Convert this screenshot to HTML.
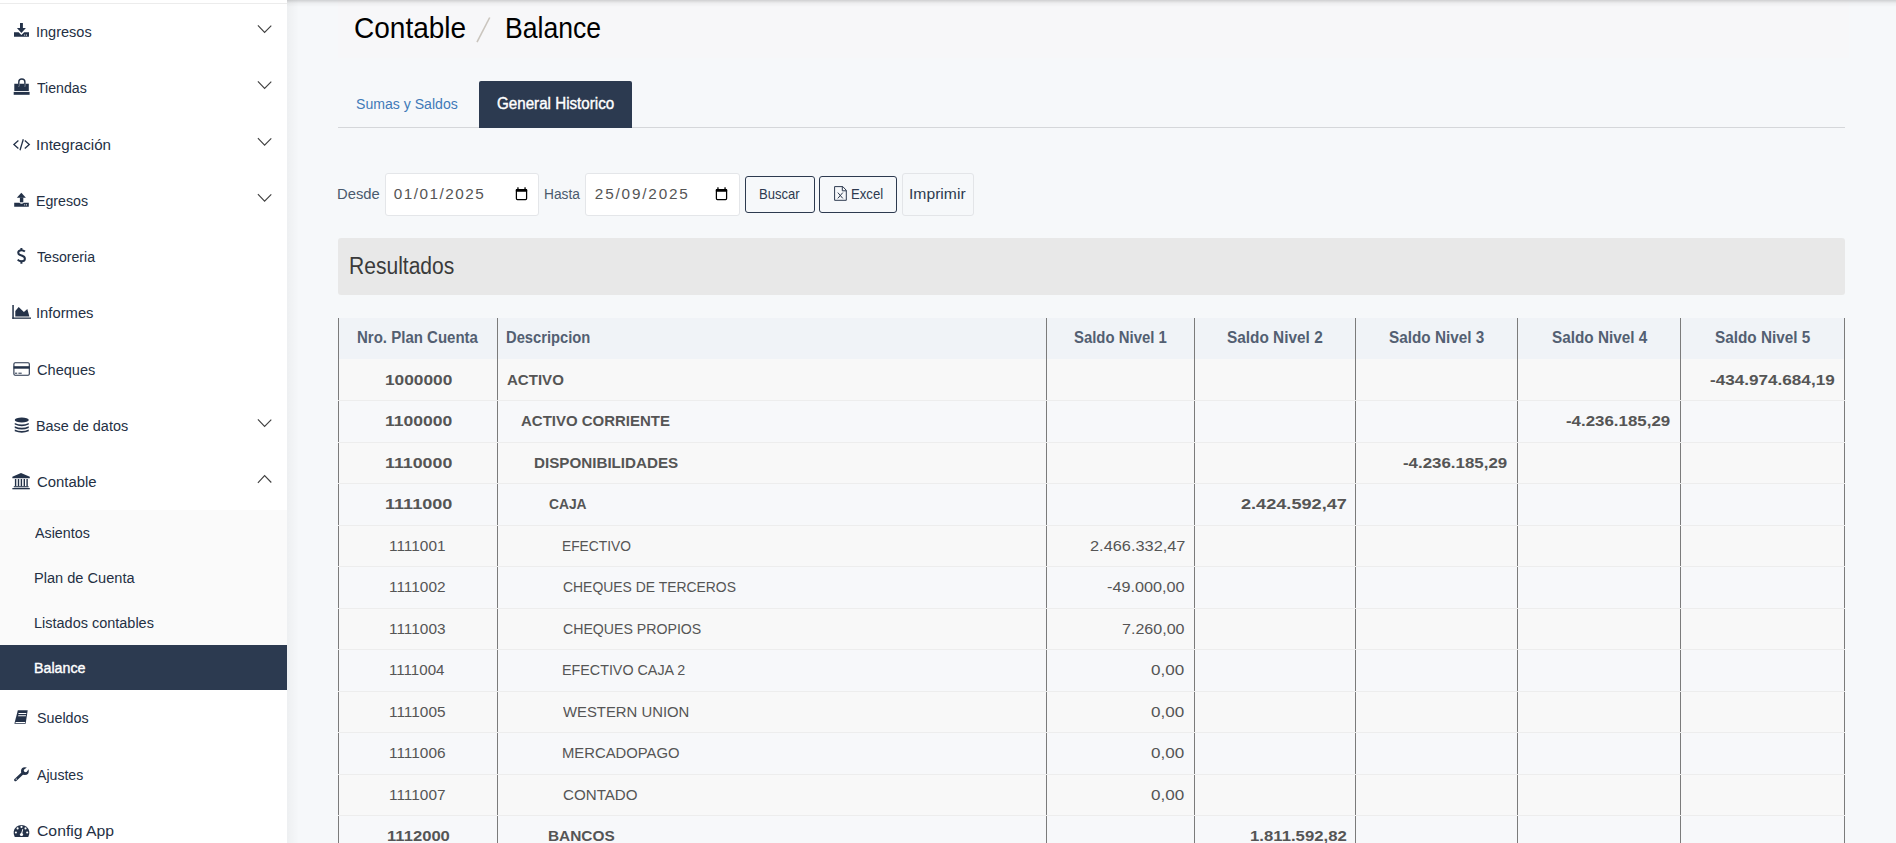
<!DOCTYPE html>
<html><head><meta charset="utf-8">
<style>
*{box-sizing:border-box;margin:0;padding:0}
html,body{width:1896px;height:843px;overflow:hidden;background:#f6f8fa;font-family:"Liberation Sans",sans-serif}
.r{position:absolute}
.t{position:absolute;white-space:nowrap;line-height:1}
</style></head><body>
<!-- sidebar -->
<div class="r" style="left:0;top:0;width:287px;height:843px;background:#ffffff"></div>
<div class="r" style="left:287px;top:0;width:12px;height:843px;background:linear-gradient(to right,rgba(0,0,0,.035),rgba(0,0,0,0))"></div>
<div class="r" style="left:0;top:3px;width:287px;height:1px;background:#ececec"></div>
<div class="r" style="left:0;top:510px;width:287px;height:135px;background:#fafafa"></div>
<div class="r" style="left:0;top:645px;width:287px;height:45px;background:#2c3a50"></div>
<!-- header shadow -->
<div class="r" style="left:338px;top:0;width:1511px;height:58px;background:#f7f7f9"></div>
<!-- tabs -->
<div class="r" style="left:338px;top:126.5px;width:1507px;height:1px;background:#d5d7da"></div>
<div class="r" style="left:479px;top:81px;width:153px;height:46.5px;background:#2c3a50;border-radius:2px 2px 0 0"></div>
<!-- inputs -->
<div class="r" style="left:385px;top:173px;width:154px;height:43px;background:#fff;border:1px solid #e4e6e9;border-radius:3px"></div>
<div class="r" style="left:585px;top:173px;width:155px;height:43px;background:#fff;border:1px solid #e4e6e9;border-radius:3px"></div>
<div class="r" style="left:745px;top:176px;width:70px;height:37px;border:1.5px solid #2d3a4f;border-radius:3px"></div>
<div class="r" style="left:819px;top:176px;width:78px;height:37px;border:1.5px solid #2d3a4f;border-radius:3px"></div>
<div class="r" style="left:902px;top:173px;width:72px;height:43px;border:1px solid #e3e5e8;border-radius:3px"></div>
<!-- results -->
<div class="r" style="left:338px;top:238px;width:1507px;height:57px;background:#e8e8e8;border-radius:3px"></div>
<!-- table -->
<div class="r" style="left:338px;top:318px;width:1507px;height:41.3px;background:#f0f3f7"></div>
<div class="r" style="left:287px;top:0;width:1609px;height:7px;background:linear-gradient(to bottom,rgba(0,0,0,.16),rgba(0,0,0,.04) 45%,rgba(0,0,0,0))"></div>
<div class="r" style="left:338px;top:359.00px;width:1507px;height:41.50px;background:#f8f8f8"></div>
<div class="r" style="left:338px;top:400.50px;width:1507px;height:41.50px;background:#f7f8fa"></div>
<div class="r" style="left:338px;top:442.00px;width:1507px;height:41.50px;background:#f8f8f8"></div>
<div class="r" style="left:338px;top:483.50px;width:1507px;height:41.50px;background:#f7f8fa"></div>
<div class="r" style="left:338px;top:525.00px;width:1507px;height:41.50px;background:#f8f8f8"></div>
<div class="r" style="left:338px;top:566.50px;width:1507px;height:41.50px;background:#f7f8fa"></div>
<div class="r" style="left:338px;top:608.00px;width:1507px;height:41.50px;background:#f8f8f8"></div>
<div class="r" style="left:338px;top:649.50px;width:1507px;height:41.50px;background:#f7f8fa"></div>
<div class="r" style="left:338px;top:691.00px;width:1507px;height:41.50px;background:#f8f8f8"></div>
<div class="r" style="left:338px;top:732.50px;width:1507px;height:41.50px;background:#f7f8fa"></div>
<div class="r" style="left:338px;top:774.00px;width:1507px;height:41.50px;background:#f8f8f8"></div>
<div class="r" style="left:338px;top:815.50px;width:1507px;height:41.50px;background:#f7f8fa"></div>
<div class="r" style="left:337.90px;top:318px;width:1.2px;height:525px;background:#7b7b7b"></div>
<div class="r" style="left:496.60px;top:318px;width:1.2px;height:525px;background:#7b7b7b"></div>
<div class="r" style="left:1045.80px;top:318px;width:1.2px;height:525px;background:#7b7b7b"></div>
<div class="r" style="left:1193.80px;top:318px;width:1.2px;height:525px;background:#7b7b7b"></div>
<div class="r" style="left:1354.80px;top:318px;width:1.2px;height:525px;background:#7b7b7b"></div>
<div class="r" style="left:1517.00px;top:318px;width:1.2px;height:525px;background:#7b7b7b"></div>
<div class="r" style="left:1679.70px;top:318px;width:1.2px;height:525px;background:#7b7b7b"></div>
<div class="r" style="left:1843.70px;top:318px;width:1.2px;height:525px;background:#7b7b7b"></div>
<div class="r" style="left:338px;top:400.00px;width:1507px;height:1px;background:#ededed"></div>
<div class="r" style="left:338px;top:441.50px;width:1507px;height:1px;background:#ededed"></div>
<div class="r" style="left:338px;top:483.00px;width:1507px;height:1px;background:#ededed"></div>
<div class="r" style="left:338px;top:524.50px;width:1507px;height:1px;background:#ededed"></div>
<div class="r" style="left:338px;top:566.00px;width:1507px;height:1px;background:#ededed"></div>
<div class="r" style="left:338px;top:607.50px;width:1507px;height:1px;background:#ededed"></div>
<div class="r" style="left:338px;top:649.00px;width:1507px;height:1px;background:#ededed"></div>
<div class="r" style="left:338px;top:690.50px;width:1507px;height:1px;background:#ededed"></div>
<div class="r" style="left:338px;top:732.00px;width:1507px;height:1px;background:#ededed"></div>
<div class="r" style="left:338px;top:773.50px;width:1507px;height:1px;background:#ededed"></div>
<div class="r" style="left:338px;top:815.00px;width:1507px;height:1px;background:#ededed"></div>
<div class="r" style="left:338px;top:856.50px;width:1507px;height:1px;background:#ededed"></div>
<svg class="r" style="left:0;top:0" width="1896" height="843" viewBox="0 0 1896 843">
<g fill="#243249">
<!-- Ingresos: download -->
<rect x="20" y="23" width="2.9" height="5.5"/>
<path d="M16.9 28.1 H25.9 L21.4 33 Z"/>
<path d="M14 32.3 H18.6 L21.4 35 L24.2 32.3 H29 V36.8 H14 Z"/>
<!-- Tiendas: bag -->
<path d="M14.3 83.8 H18.1 V86.3 H19.5 V83.8 H24.2 V86.3 H25.6 V83.8 H28.8 V90.9 H14.3 Z"/>
<rect x="13.7" y="91.9" width="15.9" height="2.9"/>
<path d="M18.8 86 V82 A3 3 0 0 1 24.9 82 V86" fill="none" stroke="#243249" stroke-width="1.4"/>
<!-- Egresos: upload -->
<path d="M16.8 197.65 H25.9 L21.35 192.8 Z"/>
<rect x="19.9" y="197.5" width="3.4" height="4.8"/>
<path d="M14.2 202.7 H19.3 Q21.6 204.6 23.9 202.7 H28.8 V206.8 H14.2 Z"/>
<!-- Informes: chart -->
<rect x="12.3" y="305" width="1.5" height="13.8"/>
<rect x="12.3" y="317.5" width="18.7" height="1.3"/>
<path d="M15.3 311 L18.7 307 L23.9 312 L27.3 309.1 L29.4 316.4 H15.3 Z"/>
<!-- Cheques: card -->
<rect x="13.9" y="362.7" width="15.4" height="12.5" rx="1.2" fill="none" stroke="#243249" stroke-width="1.1"/>
<rect x="13.6" y="366.2" width="16" height="2.5"/>
<rect x="15" y="372.7" width="2.2" height="1"/>
<rect x="18.4" y="372.7" width="3.3" height="1"/>
<!-- Base de datos -->
<ellipse cx="21.75" cy="420" rx="7" ry="2.4"/>
<path d="M14.75 422.9 Q21.75 426 28.75 422.9 V424.6 Q21.75 427.7 14.75 424.6 Z"/>
<path d="M14.75 426.2 Q21.75 429.3 28.75 426.2 V427.9 Q21.75 431 14.75 427.9 Z"/>
<path d="M14.75 429.5 Q21.75 432.6 28.75 429.5 V431.3 Q21.75 434.2 14.75 431.3 Z"/>
<!-- Contable: bank -->
<path d="M12.35 476.8 L21 473.1 L29.8 476.8 V478.2 H12.35 Z"/>
<rect x="14.9" y="479" width="1.4" height="7.2"/>
<rect x="17.8" y="479" width="1.4" height="7.2"/>
<rect x="20.7" y="479" width="1.4" height="7.2"/>
<rect x="23.6" y="479" width="1.4" height="7.2"/>
<rect x="26.4" y="479" width="1.4" height="7.2"/>
<rect x="13.8" y="486.2" width="14.8" height="1.1"/>
<rect x="12.35" y="488" width="17.45" height="1.3"/>
<!-- Sueldos: book -->
<path d="M17.8 710.2 H27.7 L25.65 723.7 H14.4 Z"/>
<!-- Ajustes: wrench -->
<path d="M15.4 779.9 L22.3 773.6" stroke="#243249" stroke-width="2.7" stroke-linecap="round"/>
<circle cx="24.9" cy="771.1" r="3.9"/>
<!-- Config App: gauge -->
<path d="M14.75 836.9 A7.9 7.9 0 1 1 28.25 836.9 Z"/>
</g>
<g fill="#ffffff">
<rect x="24.2" y="34.6" width="1" height="1"/><rect x="26" y="34.6" width="1" height="1"/>
<rect x="24.2" y="204.4" width="1" height="1"/><rect x="26" y="204.4" width="1" height="1"/>
<path d="M18.6 713 H26.4 L26.2 714 H18.4 Z"/><path d="M18.3 715.3 H26 L25.8 716.3 H18.1 Z"/>
<path d="M15.6 722 H25.2 L25.1 722.9 H15.5 Z"/>
<circle cx="17.6" cy="828.4" r="1.05"/><circle cx="21.5" cy="826.9" r="1.05"/><circle cx="25.5" cy="828.4" r="1.05"/>
<circle cx="15.9" cy="832.5" r="1.05"/><circle cx="27.2" cy="832.5" r="1.05"/><circle cx="21.5" cy="834.5" r="1.6"/>
<path d="M20.9 834 L22.4 829 L23.2 829.2 L22.1 834.3 Z"/>
<circle cx="16.2" cy="779.1" r="0.65"/><circle cx="25.6" cy="770.4" r="1.75"/><path d="M24.9 769.3 L26.8 771.2 L30 768 L28.1 766.1 Z"/>
</g>
<!-- Integracion code icon -->
<g fill="none" stroke="#243249" stroke-width="1.3">
<path d="M18.4 140.6 L13.9 144.5 L18.4 148.6"/>
<path d="M24.8 140.6 L29.3 144.5 L24.8 148.6"/>
<path d="M23.3 139.2 L20 150.2"/>
</g>
<!-- Tesoreria $ -->
<g fill="none" stroke="#243249" stroke-width="2">
<path d="M24.9 251.6 Q23.4 250.2 21.4 250.2 Q18.2 250.2 18.2 252.7 Q18.2 254.6 21.5 255.5 Q24.9 256.4 24.9 258.7 Q24.9 261.2 21.4 261.2 Q19.2 261.2 17.7 259.6"/>
<path d="M21.4 247.9 V250.6 M21.4 260.8 V263.8"/>
</g>
<!-- chevrons -->
<g fill="none" stroke="#404040" stroke-width="1.15">
<path d="M257.9 25.3 L264.6 32.4 L271.3 25.6"/>
<path d="M257.9 81.3 L264.6 88.4 L271.3 81.6"/>
<path d="M257.9 138.1 L264.6 145.2 L271.3 138.4"/>
<path d="M257.9 194.1 L264.6 201.2 L271.3 194.4"/>
<path d="M257.9 419.3 L264.6 426.4 L271.3 419.6"/>
<path d="M257.9 482.8 L264.6 475.7 L271.3 482.5"/>
</g>
<!-- title slash -->
<path d="M489.7 17.5 L477 42.2" stroke="#cac5be" stroke-width="1.6"/>
<!-- calendar icons -->
<g fill="none" stroke="#000" stroke-width="1.25">
<rect x="516.4" y="189.6" width="10.2" height="10" rx="1"/>
<rect x="716.4" y="189.6" width="10.2" height="10" rx="1"/>
</g>
<g fill="#000">
<rect x="515.8" y="189" width="11.4" height="2.8" rx="0.8"/><rect x="517.3" y="187.3" width="1.3" height="2"/><rect x="524.4" y="187.3" width="1.3" height="2"/>
<rect x="715.8" y="189" width="11.4" height="2.8" rx="0.8"/><rect x="717.3" y="187.3" width="1.3" height="2"/><rect x="724.4" y="187.3" width="1.3" height="2"/>
</g>
<!-- excel icon -->
<g fill="none" stroke="#2d3a4f" stroke-width="1">
<path d="M834.6 186.6 H842.8 L846.3 190.3 V200.3 H834.6 Z"/>
<path d="M842.3 186.6 V190.8 H846.3"/>
<path d="M837.8 192.6 L842.8 198.4 M842.8 192.6 L837.8 198.4"/>
</g>
</svg>

<div class="t" style="left:35.66px;top:24.00px;font-size:15.50px;letter-spacing:0.000px;font-weight:normal;color:#243044;;transform:scaleX(0.9370);transform-origin:0 0">Ingresos</div>
<div class="t" style="left:36.60px;top:80.00px;font-size:15.50px;letter-spacing:0.000px;font-weight:normal;color:#243044;;transform:scaleX(0.9121);transform-origin:0 0">Tiendas</div>
<div class="t" style="left:35.62px;top:137.00px;font-size:15.50px;letter-spacing:0.000px;font-weight:normal;color:#243044;;transform:scaleX(0.9778);transform-origin:0 0">Integración</div>
<div class="t" style="left:35.68px;top:193.00px;font-size:15.50px;letter-spacing:0.000px;font-weight:normal;color:#243044;;transform:scaleX(0.9160);transform-origin:0 0">Egresos</div>
<div class="t" style="left:36.60px;top:249.00px;font-size:15.50px;letter-spacing:0.000px;font-weight:normal;color:#243044;;transform:scaleX(0.9107);transform-origin:0 0">Tesoreria</div>
<div class="t" style="left:35.65px;top:305.00px;font-size:15.50px;letter-spacing:0.000px;font-weight:normal;color:#243044;;transform:scaleX(0.9539);transform-origin:0 0">Informes</div>
<div class="t" style="left:36.60px;top:362.00px;font-size:15.50px;letter-spacing:0.000px;font-weight:normal;color:#243044;;transform:scaleX(0.9407);transform-origin:0 0">Cheques</div>
<div class="t" style="left:35.67px;top:418.00px;font-size:15.50px;letter-spacing:0.000px;font-weight:normal;color:#243044;;transform:scaleX(0.9293);transform-origin:0 0">Base de datos</div>
<div class="t" style="left:36.60px;top:474.00px;font-size:15.50px;letter-spacing:0.000px;font-weight:normal;color:#243044;;transform:scaleX(0.9589);transform-origin:0 0">Contable</div>
<div class="t" style="left:34.50px;top:525.00px;font-size:15.50px;letter-spacing:0.000px;font-weight:normal;color:#243044;;transform:scaleX(0.9230);transform-origin:0 0">Asientos</div>
<div class="t" style="left:33.56px;top:570.00px;font-size:15.50px;letter-spacing:0.000px;font-weight:normal;color:#243044;;transform:scaleX(0.9413);transform-origin:0 0">Plan de Cuenta</div>
<div class="t" style="left:33.57px;top:615.00px;font-size:15.50px;letter-spacing:0.000px;font-weight:normal;color:#243044;;transform:scaleX(0.9339);transform-origin:0 0">Listados contables</div>
<div class="t" style="left:33.78px;top:660.00px;font-size:15.50px;letter-spacing:0.000px;font-weight:normal;color:#ffffff;-webkit-text-stroke:0.4px #fff;transform:scaleX(0.9192);transform-origin:0 0">Balance</div>
<div class="t" style="left:36.70px;top:710.00px;font-size:15.50px;letter-spacing:0.000px;font-weight:normal;color:#243044;;transform:scaleX(0.9224);transform-origin:0 0">Sueldos</div>
<div class="t" style="left:36.70px;top:767.00px;font-size:15.50px;letter-spacing:0.000px;font-weight:normal;color:#243044;;transform:scaleX(0.9104);transform-origin:0 0">Ajustes</div>
<div class="t" style="left:36.70px;top:823.00px;font-size:15.50px;letter-spacing:0.000px;font-weight:normal;color:#243044;;transform:scaleX(1.0162);transform-origin:0 0">Config App</div>
<div class="t" style="left:353.84px;top:14.00px;font-size:29.20px;letter-spacing:0.000px;font-weight:normal;color:#000000;;transform:scaleX(0.9598);transform-origin:0 0">Contable</div>
<div class="t" style="left:505.08px;top:14.00px;font-size:29.20px;letter-spacing:0.000px;font-weight:normal;color:#000000;;transform:scaleX(0.9106);transform-origin:0 0">Balance</div>
<div class="t" style="left:356.30px;top:96.00px;font-size:15.30px;letter-spacing:0.000px;font-weight:normal;color:#3f7ab8;;transform:scaleX(0.9208);transform-origin:0 0">Sumas y Saldos</div>
<div class="t" style="left:496.80px;top:96.00px;font-size:15.60px;letter-spacing:0.000px;font-weight:normal;color:#ffffff;-webkit-text-stroke:0.4px #fff;transform:scaleX(0.9728);transform-origin:0 0">General Historico</div>
<div class="t" style="left:337.33px;top:186.00px;font-size:15.30px;letter-spacing:0.000px;font-weight:normal;color:#4a5a6d;;transform:scaleX(0.9670);transform-origin:0 0">Desde</div>
<div class="t" style="left:393.70px;top:186.00px;font-size:15.30px;letter-spacing:1.494px;font-weight:normal;color:#555555;">01/01/2025</div>
<div class="t" style="left:543.80px;top:186.00px;font-size:15.30px;letter-spacing:0.000px;font-weight:normal;color:#4a5a6d;;transform:scaleX(0.8973);transform-origin:0 0">Hasta</div>
<div class="t" style="left:594.80px;top:186.00px;font-size:15.30px;letter-spacing:1.828px;font-weight:normal;color:#555555;">25/09/2025</div>
<div class="t" style="left:758.70px;top:187.00px;font-size:14.60px;letter-spacing:0.000px;font-weight:normal;color:#2d3a4f;;transform:scaleX(0.8954);transform-origin:0 0">Buscar</div>
<div class="t" style="left:850.50px;top:187.00px;font-size:14.60px;letter-spacing:0.000px;font-weight:normal;color:#2d3a4f;;transform:scaleX(0.9000);transform-origin:0 0">Excel</div>
<div class="t" style="left:909.23px;top:187.00px;font-size:14.60px;letter-spacing:0.000px;font-weight:normal;color:#2d3a4f;;transform:scaleX(1.0747);transform-origin:0 0">Imprimir</div>
<div class="t" style="left:349.30px;top:255.00px;font-size:23.30px;letter-spacing:0.000px;font-weight:normal;color:#3a3a3a;;transform:scaleX(0.9034);transform-origin:0 0">Resultados</div>
<div class="t" style="left:356.64px;top:330.00px;font-size:15.60px;letter-spacing:0.000px;font-weight:bold;color:#535f72;;transform:scaleX(0.9627);transform-origin:0 0">Nro. Plan Cuenta</div>
<div class="t" style="left:506.26px;top:330.00px;font-size:15.60px;letter-spacing:0.000px;font-weight:bold;color:#535f72;;transform:scaleX(0.9449);transform-origin:0 0">Descripcion</div>
<div class="t" style="left:1073.80px;top:330.00px;font-size:15.60px;letter-spacing:0.000px;font-weight:bold;color:#535f72;;transform:scaleX(0.9559);transform-origin:0 0">Saldo Nivel 1</div>
<div class="t" style="left:1227.00px;top:330.00px;font-size:15.60px;letter-spacing:0.000px;font-weight:bold;color:#535f72;;transform:scaleX(0.9857);transform-origin:0 0">Saldo Nivel 2</div>
<div class="t" style="left:1389.00px;top:330.00px;font-size:15.60px;letter-spacing:0.000px;font-weight:bold;color:#535f72;;transform:scaleX(0.9806);transform-origin:0 0">Saldo Nivel 3</div>
<div class="t" style="left:1551.70px;top:330.00px;font-size:15.60px;letter-spacing:0.000px;font-weight:bold;color:#535f72;;transform:scaleX(0.9806);transform-origin:0 0">Saldo Nivel 4</div>
<div class="t" style="left:1715.00px;top:330.00px;font-size:15.60px;letter-spacing:0.000px;font-weight:bold;color:#535f72;;transform:scaleX(0.9806);transform-origin:0 0">Saldo Nivel 5</div>
<div class="t" style="left:384.55px;top:372.00px;font-size:15.50px;letter-spacing:0.000px;font-weight:bold;color:#555555;;transform:scaleX(1.1152);transform-origin:0 0">1000000</div>
<div class="t" style="left:507.20px;top:372.00px;font-size:15.50px;letter-spacing:0.000px;font-weight:bold;color:#555555;;transform:scaleX(0.9709);transform-origin:0 0">ACTIVO</div>
<div class="t" style="left:1709.60px;top:372.00px;font-size:15.50px;letter-spacing:0.000px;font-weight:bold;color:#555555;;transform:scaleX(1.1043);transform-origin:0 0">-434.974.684,19</div>
<div class="t" style="left:384.55px;top:413.00px;font-size:15.50px;letter-spacing:0.000px;font-weight:bold;color:#555555;;transform:scaleX(1.1314);transform-origin:0 0">1100000</div>
<div class="t" style="left:521.20px;top:413.00px;font-size:15.50px;letter-spacing:0.000px;font-weight:bold;color:#555555;;transform:scaleX(0.9661);transform-origin:0 0">ACTIVO CORRIENTE</div>
<div class="t" style="left:1566.10px;top:413.00px;font-size:15.50px;letter-spacing:0.000px;font-weight:bold;color:#555555;;transform:scaleX(1.0891);transform-origin:0 0">-4.236.185,29</div>
<div class="t" style="left:384.55px;top:455.00px;font-size:15.50px;letter-spacing:0.000px;font-weight:bold;color:#555555;;transform:scaleX(1.1480);transform-origin:0 0">1110000</div>
<div class="t" style="left:534.22px;top:455.00px;font-size:15.50px;letter-spacing:0.000px;font-weight:bold;color:#555555;;transform:scaleX(0.9793);transform-origin:0 0">DISPONIBILIDADES</div>
<div class="t" style="left:1403.40px;top:455.00px;font-size:15.50px;letter-spacing:0.000px;font-weight:bold;color:#555555;;transform:scaleX(1.0891);transform-origin:0 0">-4.236.185,29</div>
<div class="t" style="left:384.55px;top:496.00px;font-size:15.50px;letter-spacing:0.000px;font-weight:bold;color:#555555;;transform:scaleX(1.1652);transform-origin:0 0">1111000</div>
<div class="t" style="left:549.20px;top:496.00px;font-size:15.50px;letter-spacing:0.000px;font-weight:bold;color:#555555;;transform:scaleX(0.8903);transform-origin:0 0">CAJA</div>
<div class="t" style="left:1240.70px;top:496.00px;font-size:15.50px;letter-spacing:0.000px;font-weight:bold;color:#555555;;transform:scaleX(1.1693);transform-origin:0 0">2.424.592,47</div>
<div class="t" style="left:389.41px;top:538.00px;font-size:15.50px;letter-spacing:0.000px;font-weight:normal;color:#555555;;transform:scaleX(0.9933);transform-origin:0 0">1111001</div>
<div class="t" style="left:562.31px;top:538.00px;font-size:15.50px;letter-spacing:0.000px;font-weight:normal;color:#555555;;transform:scaleX(0.8895);transform-origin:0 0">EFECTIVO</div>
<div class="t" style="left:1090.00px;top:538.00px;font-size:15.50px;letter-spacing:0.000px;font-weight:normal;color:#555555;;transform:scaleX(1.0547);transform-origin:0 0">2.466.332,47</div>
<div class="t" style="left:389.41px;top:579.00px;font-size:15.50px;letter-spacing:0.000px;font-weight:normal;color:#555555;;transform:scaleX(0.9933);transform-origin:0 0">1111002</div>
<div class="t" style="left:563.20px;top:579.00px;font-size:15.50px;letter-spacing:0.000px;font-weight:normal;color:#555555;;transform:scaleX(0.8978);transform-origin:0 0">CHEQUES DE TERCEROS</div>
<div class="t" style="left:1106.80px;top:579.00px;font-size:15.50px;letter-spacing:0.000px;font-weight:normal;color:#555555;;transform:scaleX(1.0470);transform-origin:0 0">-49.000,00</div>
<div class="t" style="left:389.41px;top:621.00px;font-size:15.50px;letter-spacing:0.000px;font-weight:normal;color:#555555;;transform:scaleX(0.9933);transform-origin:0 0">1111003</div>
<div class="t" style="left:563.20px;top:621.00px;font-size:15.50px;letter-spacing:0.000px;font-weight:normal;color:#555555;;transform:scaleX(0.9124);transform-origin:0 0">CHEQUES PROPIOS</div>
<div class="t" style="left:1121.90px;top:621.00px;font-size:15.50px;letter-spacing:0.000px;font-weight:normal;color:#555555;;transform:scaleX(1.0360);transform-origin:0 0">7.260,00</div>
<div class="t" style="left:389.42px;top:662.00px;font-size:15.50px;letter-spacing:0.000px;font-weight:normal;color:#555555;;transform:scaleX(0.9756);transform-origin:0 0">1111004</div>
<div class="t" style="left:562.28px;top:662.00px;font-size:15.50px;letter-spacing:0.000px;font-weight:normal;color:#555555;;transform:scaleX(0.9229);transform-origin:0 0">EFECTIVO CAJA 2</div>
<div class="t" style="left:1151.20px;top:662.00px;font-size:15.50px;letter-spacing:0.000px;font-weight:normal;color:#555555;;transform:scaleX(1.0999);transform-origin:0 0">0,00</div>
<div class="t" style="left:389.41px;top:704.00px;font-size:15.50px;letter-spacing:0.000px;font-weight:normal;color:#555555;;transform:scaleX(0.9933);transform-origin:0 0">1111005</div>
<div class="t" style="left:563.20px;top:704.00px;font-size:15.50px;letter-spacing:0.000px;font-weight:normal;color:#555555;;transform:scaleX(0.9590);transform-origin:0 0">WESTERN UNION</div>
<div class="t" style="left:1151.20px;top:704.00px;font-size:15.50px;letter-spacing:0.000px;font-weight:normal;color:#555555;;transform:scaleX(1.0999);transform-origin:0 0">0,00</div>
<div class="t" style="left:389.41px;top:745.00px;font-size:15.50px;letter-spacing:0.000px;font-weight:normal;color:#555555;;transform:scaleX(0.9933);transform-origin:0 0">1111006</div>
<div class="t" style="left:562.24px;top:745.00px;font-size:15.50px;letter-spacing:0.000px;font-weight:normal;color:#555555;;transform:scaleX(0.9564);transform-origin:0 0">MERCADOPAGO</div>
<div class="t" style="left:1151.20px;top:745.00px;font-size:15.50px;letter-spacing:0.000px;font-weight:normal;color:#555555;;transform:scaleX(1.0999);transform-origin:0 0">0,00</div>
<div class="t" style="left:389.41px;top:787.00px;font-size:15.50px;letter-spacing:0.000px;font-weight:normal;color:#555555;;transform:scaleX(0.9933);transform-origin:0 0">1111007</div>
<div class="t" style="left:563.20px;top:787.00px;font-size:15.50px;letter-spacing:0.000px;font-weight:normal;color:#555555;;transform:scaleX(0.9765);transform-origin:0 0">CONTADO</div>
<div class="t" style="left:1151.20px;top:787.00px;font-size:15.50px;letter-spacing:0.000px;font-weight:normal;color:#555555;;transform:scaleX(1.0999);transform-origin:0 0">0,00</div>
<div class="t" style="left:386.75px;top:828.00px;font-size:15.50px;letter-spacing:0.000px;font-weight:bold;color:#555555;;transform:scaleX(1.0722);transform-origin:0 0">1112000</div>
<div class="t" style="left:548.21px;top:828.00px;font-size:15.50px;letter-spacing:0.000px;font-weight:bold;color:#555555;;transform:scaleX(0.9935);transform-origin:0 0">BANCOS</div>
<div class="t" style="left:1249.70px;top:828.00px;font-size:15.50px;letter-spacing:0.000px;font-weight:bold;color:#555555;;transform:scaleX(1.0794);transform-origin:0 0">1.811.592,82</div>
</body></html>
